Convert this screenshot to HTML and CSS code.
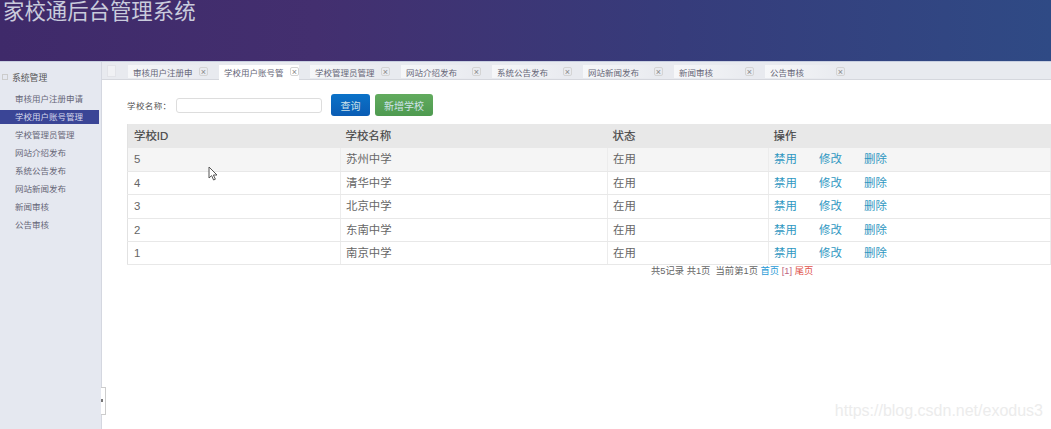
FILE: index.html
```html
<!DOCTYPE html>
<html lang="zh-CN">
<head>
  <meta charset="UTF-8" />
  <title>家校通后台管理系统</title>
  <link rel="stylesheet" href="styles.css">
</head>
<body>
  <div class="header">
    <div class="logo">家校通后台管理系统</div>
  </div>

  <div class="main">
    <div class="sidebar">
      <div class="menu-title"><span class="menu-box"></span>系统管理</div>
      <ul class="menu">
        <li>审核用户注册申请</li>
        <li class="active">学校用户账号管理</li>
        <li>学校管理员管理</li>
        <li>网站介绍发布</li>
        <li>系统公告发布</li>
        <li>网站新闻发布</li>
        <li>新闻审核</li>
        <li>公告审核</li>
      </ul>
      <div class="collapse"><span class="collapse-dot"></span></div>
    </div>

    <div class="content">
      <div class="tabs">
        <div class="tab-arrow"></div>
        <div class="tab"><span>审核用户注册申</span><i class="close">×</i></div>
        <div class="tab current"><span>学校用户账号管</span><i class="close">×</i></div>
        <div class="tab"><span>学校管理员管理</span><i class="close">×</i></div>
        <div class="tab"><span>网站介绍发布</span><i class="close">×</i></div>
        <div class="tab"><span>系统公告发布</span><i class="close">×</i></div>
        <div class="tab"><span>网站新闻发布</span><i class="close">×</i></div>
        <div class="tab"><span>新闻审核</span><i class="close">×</i></div>
        <div class="tab"><span>公告审核</span><i class="close">×</i></div>
      </div>

      <div class="search">
        <label>学校名称：</label>
        <input type="text" />
        <button class="btn btn-blue">查询</button>
        <button class="btn btn-green">新增学校</button>
      </div>

      <table class="list">
        <thead>
          <tr><th class="c1">学校ID</th><th class="c2">学校名称</th><th class="c3">状态</th><th>操作</th></tr>
        </thead>
        <tbody>
          <tr><td>5</td><td>苏州中学</td><td>在用</td><td class="ops"><a>禁用</a><a>修改</a><a>删除</a></td></tr>
          <tr><td>4</td><td>清华中学</td><td>在用</td><td class="ops"><a>禁用</a><a>修改</a><a>删除</a></td></tr>
          <tr><td>3</td><td>北京中学</td><td>在用</td><td class="ops"><a>禁用</a><a>修改</a><a>删除</a></td></tr>
          <tr><td>2</td><td>东南中学</td><td>在用</td><td class="ops"><a>禁用</a><a>修改</a><a>删除</a></td></tr>
          <tr><td>1</td><td>南京中学</td><td>在用</td><td class="ops"><a>禁用</a><a>修改</a><a>删除</a></td></tr>
        </tbody>
      </table>

      <div class="pager">共5记录 共1页  当前第1页 <a class="first">首页</a> <span class="num">[1]</span> <a class="last">尾页</a></div>
    </div>
  </div>

  <svg class="cursor" width="11" height="15" viewBox="0 0 11 15">
    <path d="M1 1 L1 12 L3.6 9.6 L5.6 14 L7.4 13.2 L5.4 9 L9 9 Z" fill="#fff" stroke="#555" stroke-width="1" />
  </svg>
  <div class="watermark">https://blog.csdn.net/exodus3</div>
</body>
</html>
```

FILE: styles.css
```css
* {
  box-sizing: border-box;
  margin: 0;
  padding: 0;
}

body {
  width: 1051px;
  height: 429px;
  overflow: hidden;
  background: #fff;
  font-family: "Liberation Sans", "Noto Sans CJK SC", sans-serif;
  color: #555;
  position: relative;
}

.header {
  height: 62px;
  background: linear-gradient(90deg, #3f2a6a 0%, #432f6f 30%, #363c7b 65%, #2f4a85 100%);
  border-bottom: 1px solid #c8cfe0;
}

.logo {
  font-size: 21.4px;
  line-height: 25px;
  padding-left: 3px;
  color: #c9cbdc;
}

.main {
  display: flex;
  height: 367px;
}

.sidebar {
  width: 102px;
  flex-shrink: 0;
  background: #e5e8f0;
  border-right: 1px solid #d4d7e0;
  padding-top: 7px;
  position: relative;
}

.menu-title {
  display: flex;
  align-items: center;
  height: 16px;
  font-size: 8.8px;
  color: #555;
  margin-bottom: 5px;
}

.menu-box {
  width: 6px;
  height: 6px;
  border: 1px solid #ccc;
  margin: 0 4px 0 2px;
}

.menu {
  list-style: none;
}

.menu li {
  height: 18px;
  line-height: 18px;
  font-size: 8.5px;
  padding-left: 15px;
  color: #667;
  width: 99px;
}

.menu li.active {
  height: 14px;
  line-height: 14px;
  margin: 2px 0;
  background: #3a4596;
  color: #d5d8ec;
}

.collapse {
  position: absolute;
  right: -5px;
  top: 325px;
  width: 5px;
  height: 28px;
  background: #fff;
  border: 1px solid #ccc;
  border-left: none;
}

.collapse-dot {
  display: block;
  width: 2px;
  height: 3px;
  margin-top: 11px;
  background: #777;
}

.content {
  flex: 1;
  min-width: 0;
}

.tabs {
  display: flex;
  align-items: flex-end;
  height: 18px;
  background: #e8eaef;
  border-bottom: 1px solid #d5d7dd;
  padding-left: 5px;
}

.tab-arrow {
  width: 9px;
  height: 12px;
  margin: 0 12px 2px 0;
  background: #f0f1f4;
  border: 1px solid #e2e3e8;
}

.tab {
  display: flex;
  align-items: center;
  justify-content: space-between;
  width: 80px;
  height: 13px;
  margin-right: 11px;
  margin-bottom: 1px;
  padding-left: 5px;
  font-size: 8.5px;
  white-space: nowrap;
  color: #667;
  background: linear-gradient(90deg, #f6f7f9, #e8eaef);
}

.tab.current {
  background: #fff;
  height: 15px;
  margin-bottom: -1px;
  padding-bottom: 2px;
}

.close {
  width: 9px;
  height: 9px;
  line-height: 8px;
  border: 1px solid #d4d4d4;
  border-radius: 2px;
  font-size: 9px;
  font-style: normal;
  text-align: center;
  color: #888;
}

.search {
  display: flex;
  align-items: center;
  height: 22px;
  margin: 14px 0 0 25px;
  font-size: 8.5px;
  color: #555;
}

.search label {
  white-space: nowrap;
  letter-spacing: 0.4px;
  width: 49px;
}

.search input {
  width: 146px;
  height: 15px;
  margin-right: 9px;
  border: 1px solid #ddd;
  border-radius: 3px;
  background: #fff;
}

.btn {
  height: 22px;
  border: none;
  border-radius: 3px;
  font-family: inherit;
  font-size: 10px;
  color: #cfe3ea;
}

.btn-blue {
  width: 39px;
  margin-right: 5px;
  background: linear-gradient(#0b72c8, #0a5cb4);
}

.btn-green {
  width: 58px;
  background: linear-gradient(#62ab5e, #4e9a50);
}

.list {
  width: 924px;
  margin: 8px 0 0 25px;
  border-collapse: collapse;
  table-layout: fixed;
  font-size: 11.4px;
  border-left: 1px solid #e2e2e2;
}

.list th {
  height: 24px;
  padding-left: 5px;
  text-align: left;
  font-weight: normal;
  line-height: 16px;
  color: #444;
  background: #e8e8e8;
  -webkit-text-stroke: 0.15px #444;
}

.list td {
  height: 23.4px;
  padding-left: 5px;
  line-height: 16px;
  color: #666;
  border-bottom: 1px solid #e8e8e8;
  border-right: 1px solid #ececec;
}

.list th:first-child,
.list td:first-child {
  padding-left: 6px;
}

.list tbody tr:first-child td {
  background: #f5f5f5;
}

.list .c1 {
  width: 213px;
}

.list .c2 {
  width: 267px;
}

.list .c3 {
  width: 161px;
}

.ops a {
  display: inline-block;
  width: 45px;
  color: #2f97c1;
}

.pager {
  margin: 0 0 0 549px;
  font-size: 9.3px;
  line-height: 13px;
  white-space: pre;
  color: #666;
}

.pager .first {
  color: #2a9ad6;
}

.pager .num {
  color: #c0657f;
}

.pager .last {
  color: #e0524a;
}

.cursor {
  position: absolute;
  left: 208px;
  top: 166px;
}

.watermark {
  position: absolute;
  right: 8px;
  top: 402px;
  font-size: 16px;
  line-height: 18px;
  color: #ececec;
}
```
